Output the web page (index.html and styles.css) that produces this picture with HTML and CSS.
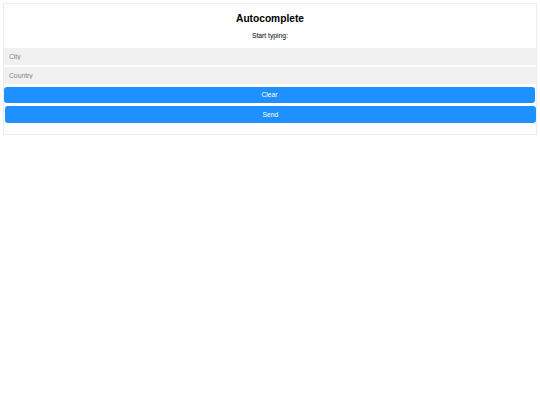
FILE: index.html
```html
<!DOCTYPE html>
<html lang="en">
<head>
<meta charset="utf-8">
<title>Autocomplete</title>
<link rel="stylesheet" href="styles.css">
</head>
<body>
<div class="card">
  <h2 class="title">Autocomplete</h2>
  <p class="hint">Start typing:</p>
  <form class="form" autocomplete="off">
    <input class="field" type="text" placeholder="City">
    <input class="field" type="text" placeholder="Country">
    <button class="btn btn-clear" type="button">Clear</button>
    <button class="btn btn-send" type="button">Send</button>
  </form>
</div>
</body>
</html>
```
FILE: styles.css
```css
html, body {
  margin: 0;
  padding: 0;
  background: #ffffff;
}
body {
  font-family: "Liberation Sans", Arial, sans-serif;
  color: #000;
}
.card {
  margin: 3px;
  border: 1px solid #ececec;
  padding: 9px 0 11px 0;
  display: flex;
  flex-direction: column;
}
.title {
  margin: 0;
  font-size: 10.2px;
  line-height: 12px;
  font-weight: bold;
  text-align: center;
}
.hint {
  margin: 6px 0 0 0;
  font-size: 6.75px;
  line-height: 10px;
  text-align: center;
}
.form {
  margin-top: 7px;
  display: flex;
  flex-direction: column;
  gap: 2.5px;
}
.field {
  box-sizing: border-box;
  height: 16.75px;
  width: 100%;
  margin: 0;
  border: none;
  outline: none;
  background: #f1f1f1;
  padding: 0 0 0 5px;
  font-family: "Liberation Sans", Arial, sans-serif;
  font-size: 6.75px;
  color: #333;
}
.field::placeholder {
  color: #858585;
}
.btn {
  box-sizing: border-box;
  height: 16.75px;
  margin: 0;
  border: none;
  border-radius: 3px;
  background: #1e90ff;
  color: #ffffff;
  font-family: "Liberation Sans", Arial, sans-serif;
  font-size: 6.75px;
  padding: 0;
  cursor: pointer;
}
.btn-clear {
  margin-right: 1px;
}
.btn-send {
  margin-left: 1px;
}
```
